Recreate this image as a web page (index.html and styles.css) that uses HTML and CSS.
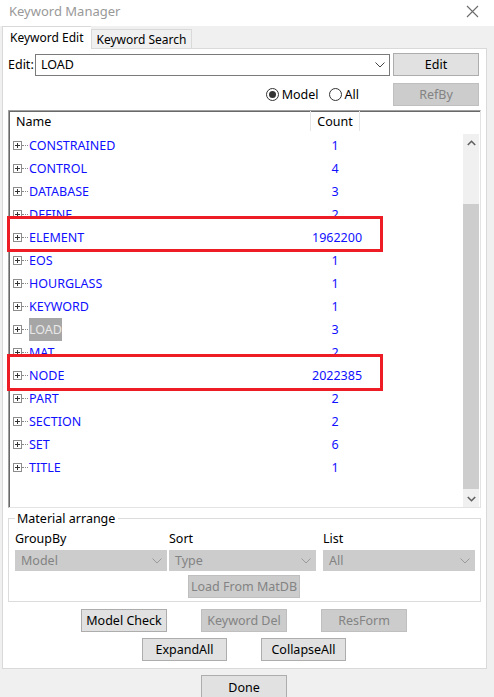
FILE: index.html
```html
<!DOCTYPE html>
<html>
<head>
<meta charset="utf-8">
<link rel="stylesheet" href="styles.css">
</head>
<body>
<div class="window">
  <div class="titlebar">
    <span class="title">Keyword Manager</span>
    <svg class="close" width="13" height="13" viewBox="0 0 13 13"><path d="M1 1L12 12M12 1L1 12" stroke="#6b6b6b" stroke-width="1.1" fill="none"/></svg>
  </div>
  <div class="tabs">
    <div class="tab active">Keyword Edit</div>
    <div class="tab">Keyword Search</div>
  </div>
  <div class="panel">
    <div class="edit-row">
      <span class="label">Edit:</span>
      <div class="combo"><span>LOAD</span><svg width="10" height="6" viewBox="0 0 10 6"><path d="M0.5 0.5L5 5L9.5 0.5" stroke="#444" fill="none"/></svg></div>
      <div class="btn wide">Edit</div>
    </div>
    <div class="radio-row">
      <label class="radio"><span class="circle checked"></span>Model</label>
      <label class="radio"><span class="circle"></span>All</label>
      <div class="btn wide disabled">RefBy</div>
    </div>
    <div class="list">
      <div class="header">
        <div class="h-name">Name</div>
        <div class="h-count">Count</div>
      </div>
      <div class="list-body">
        <div class="rows">
          <div class="row"><span class="plus"></span><span class="dots"></span><span class="name">CONSTRAINED</span><span class="count">1</span></div>
          <div class="row"><span class="plus"></span><span class="dots"></span><span class="name">CONTROL</span><span class="count">4</span></div>
          <div class="row"><span class="plus"></span><span class="dots"></span><span class="name">DATABASE</span><span class="count">3</span></div>
          <div class="row"><span class="plus"></span><span class="dots"></span><span class="name">DEFINE</span><span class="count">2</span></div>
          <div class="row"><span class="plus"></span><span class="dots"></span><span class="name">ELEMENT</span><span class="count big">1962200</span></div>
          <div class="row"><span class="plus"></span><span class="dots"></span><span class="name">EOS</span><span class="count">1</span></div>
          <div class="row"><span class="plus"></span><span class="dots"></span><span class="name">HOURGLASS</span><span class="count">1</span></div>
          <div class="row"><span class="plus"></span><span class="dots"></span><span class="name">KEYWORD</span><span class="count">1</span></div>
          <div class="row"><span class="plus"></span><span class="dots"></span><span class="name"><span class="sel">LOAD</span></span><span class="count">3</span></div>
          <div class="row"><span class="plus"></span><span class="dots"></span><span class="name">MAT</span><span class="count">2</span></div>
          <div class="row"><span class="plus"></span><span class="dots"></span><span class="name">NODE</span><span class="count big">2022385</span></div>
          <div class="row"><span class="plus"></span><span class="dots"></span><span class="name">PART</span><span class="count">2</span></div>
          <div class="row"><span class="plus"></span><span class="dots"></span><span class="name">SECTION</span><span class="count">2</span></div>
          <div class="row"><span class="plus"></span><span class="dots"></span><span class="name">SET</span><span class="count">6</span></div>
          <div class="row"><span class="plus"></span><span class="dots"></span><span class="name">TITLE</span><span class="count">1</span></div>
        </div>
        <div class="scrollbar">
          <div class="arrow"><svg width="9" height="6" viewBox="0 0 9 6"><path d="M0.8 5L4.5 1.3L8.2 5" stroke="#606060" stroke-width="1.6" fill="none"/></svg></div>
          <div class="track"><div class="thumb"></div></div>
          <div class="arrow"><svg width="9" height="6" viewBox="0 0 9 6"><path d="M0.8 1L4.5 4.7L8.2 1" stroke="#606060" stroke-width="1.6" fill="none"/></svg></div>
        </div>
      </div>
      <div class="mark mark-element"></div>
      <div class="mark mark-node"></div>
    </div>
    <fieldset class="group">
      <legend>Material arrange</legend>
      <div class="grid">
        <span class="glabel">GroupBy</span>
        <span class="glabel">Sort</span>
        <span class="glabel">List</span>
        <div class="combo disabled"><span>Model</span><svg width="10" height="6" viewBox="0 0 10 6"><path d="M0.5 0.5L5 5L9.5 0.5" stroke="#9a9a9a" fill="none"/></svg></div>
        <div class="combo disabled"><span>Type</span><svg width="10" height="6" viewBox="0 0 10 6"><path d="M0.5 0.5L5 5L9.5 0.5" stroke="#9a9a9a" fill="none"/></svg></div>
        <div class="combo disabled"><span>All</span><svg width="10" height="6" viewBox="0 0 10 6"><path d="M0.5 0.5L5 5L9.5 0.5" stroke="#9a9a9a" fill="none"/></svg></div>
      </div>
      <div class="center-row"><div class="btn disabled matdb">Load From MatDB</div></div>
    </fieldset>
    <div class="btn-row one">
      <div class="btn">Model Check</div>
      <div class="btn disabled">Keyword Del</div>
      <div class="btn disabled">ResForm</div>
    </div>
    <div class="btn-row two">
      <div class="btn">ExpandAll</div>
      <div class="btn">CollapseAll</div>
    </div>
  </div>
  <div class="footer">
    <div class="btn done">Done</div>
  </div>
</div>
</body>
</html>
```
FILE: styles.css
```css
* { box-sizing: border-box; }
html, body { margin: 0; padding: 0; }
body {
  width: 494px;
  height: 697px;
  overflow: hidden;
  background: #f0f0f0;
  font-family: "Noto Sans", "Liberation Sans", sans-serif;
  font-size: 12px;
  color: #000;
}
.window { width: 494px; height: 697px; position: relative; }

.titlebar {
  height: 26px;
  background: #fff;
  display: flex;
  align-items: center;
  justify-content: space-between;
  padding: 0 15px 4px 9px;
}
.title { color: #999; font-size: 13px; }

.tabs { display: flex; align-items: flex-end; height: 22px; padding-left: 2px; }
.tab {
  height: 19px;
  padding: 0 5px 0 4px;
  border: 1px solid #d9d9d9;
  border-bottom: none;
  background: #f0f0f0;
  display: flex;
  align-items: center;
  font-size: 12px;
}
.tab.active {
  height: 23px;
  background: #fff;
  padding: 0 8px 2px 7px;
  position: relative;
  top: 1px;
  border-right: none;
}

.panel {
  width: 485px;
  height: 621px;
  margin-left: 2px;
  background: #fff;
  border: 1px solid #d9d9d9;
  padding: 4px 0 0 5px;
}

.btn {
  height: 23px;
  width: 86px;
  background: #e1e1e1;
  border: 1px solid #adadad;
  display: flex;
  align-items: center;
  justify-content: center;
  font-size: 12.5px;
}
.btn.disabled { background: #cccccc; border-color: #bfbfbf; color: #838383; }

.edit-row { display: flex; align-items: center; height: 23px; }
.label { width: 27px; font-size: 12.5px; }
.combo {
  height: 22px;
  border: 1px solid #7a7a7a;
  background: #fff;
  display: flex;
  align-items: center;
  justify-content: space-between;
  padding: 0 4px 0 5px;
  font-size: 12.5px;
}
.edit-row .combo { width: 355px; margin-right: 3px; }
.combo.disabled { background: #cccccc; border-color: #cccccc; color: #838383; }

.radio-row {
  display: flex;
  align-items: center;
  height: 23px;
  margin-top: 7px;
  justify-content: flex-end;
  padding-right: 7px;
}
.radio { display: flex; align-items: center; margin-right: 10px; font-size: 12.5px; }
.radio:nth-child(2) { margin-right: 34px; }
.circle {
  width: 13px; height: 13px;
  border: 1px solid #333;
  border-radius: 50%;
  margin-right: 3px;
  display: flex; align-items: center; justify-content: center;
}
.circle.checked::after {
  content: ""; width: 7px; height: 7px; border-radius: 50%; background: #333;
}

.list {
  position: relative;
  width: 473px;
  height: 398px;
  margin-top: 4px;
  border-top: 1px solid #a0a0a0;
  border-left: 1px solid #a0a0a0;
  border-right: 1px solid #e3e3e3;
  border-bottom: 1px solid #e3e3e3;
  box-shadow: inset 1px 1px 0 #696969;
  display: flex;
  flex-direction: column;
}
.header { display: flex; height: 23px; padding-left: 1px; padding-bottom: 3px; }
.h-name { width: 300px; padding-left: 6px; display: flex; align-items: center; font-size: 12.5px; }
.h-count {
  width: 50px;
  border-left: 1px solid #e5e5e5;
  border-right: 1px solid #e5e5e5;
  display: flex; align-items: center; justify-content: center; font-size: 12.5px;
}
.list-body { flex: 1; display: flex; }
.rows { flex: 1; padding-left: 1px; }
.row { height: 23px; display: flex; align-items: center; color: #1010ff; font-size: 12.5px; }
.plus {
  width: 9px; height: 9px;
  margin-left: 3px;
  border: 1px solid #8c8c8c;
  background: #fff;
  position: relative;
}
.plus::before { content: ""; position: absolute; left: 1px; top: 3px; width: 5px; height: 1px; background: #333; }
.plus::after { content: ""; position: absolute; left: 3px; top: 1px; width: 1px; height: 5px; background: #333; }
.dots { width: 6px; border-top: 1px dotted #888; margin-right: 1px; }
.name { width: 281px; }
.sel { background: #a6a6a6; color: #e8e8e8; padding: 3px 0; }
.count { width: 50px; text-align: center; }
.count.big { text-align: left; padding-left: 2px; overflow: visible; white-space: nowrap; }

.scrollbar { width: 16px; background: #f0f0f0; display: flex; flex-direction: column; margin-right: 1px; }
.arrow { height: 17px; display: flex; align-items: center; justify-content: center; }
.track { flex: 1; display: flex; flex-direction: column; padding-top: 53px; padding-bottom: 1px; }
.thumb { flex: 1; background: #cdcdcd; }

.mark { position: absolute; left: -2px; width: 376px; border: 3px solid #ee1c25; }
.mark-element { top: 105px; height: 36px; }
.mark-node { top: 243px; height: 37px; }

.group {
  width: 473px;
  margin: 2px 0 0 0;
  padding: 0 6px 5px 6px;
  border: 1px solid #dcdcdc;
  height: 92px;
}
.group legend { padding: 0 3px 0 2px; font-size: 12.5px; margin-left: 0; }
.grid {
  display: grid;
  grid-template-columns: 152px 147px 152px;
  column-gap: 2px;
  row-gap: 3px;
  margin-top: 3px;
}
.grid .combo:nth-child(6) { margin-left: 5px; width: 152px; }
.grid .glabel:nth-child(3) { margin-left: 5px; }
.glabel { font-size: 12.5px; height: 17px; display: flex; align-items: center; }
.grid .combo { height: 21px; }
.center-row { display: flex; padding-left: 173px; margin-top: 4px; }
.matdb { width: 112px; }

.btn-row { display: flex; }
.btn-row.one { margin-top: 7px; padding-left: 73px; gap: 34px; }
.btn-row.two { margin-top: 6px; padding-left: 134px; gap: 34px; }
.btn-row.two .btn { width: 85px; }

.footer { display: flex; padding-left: 201px; padding-top: 6px; }
.done { height: 24px; }
```
